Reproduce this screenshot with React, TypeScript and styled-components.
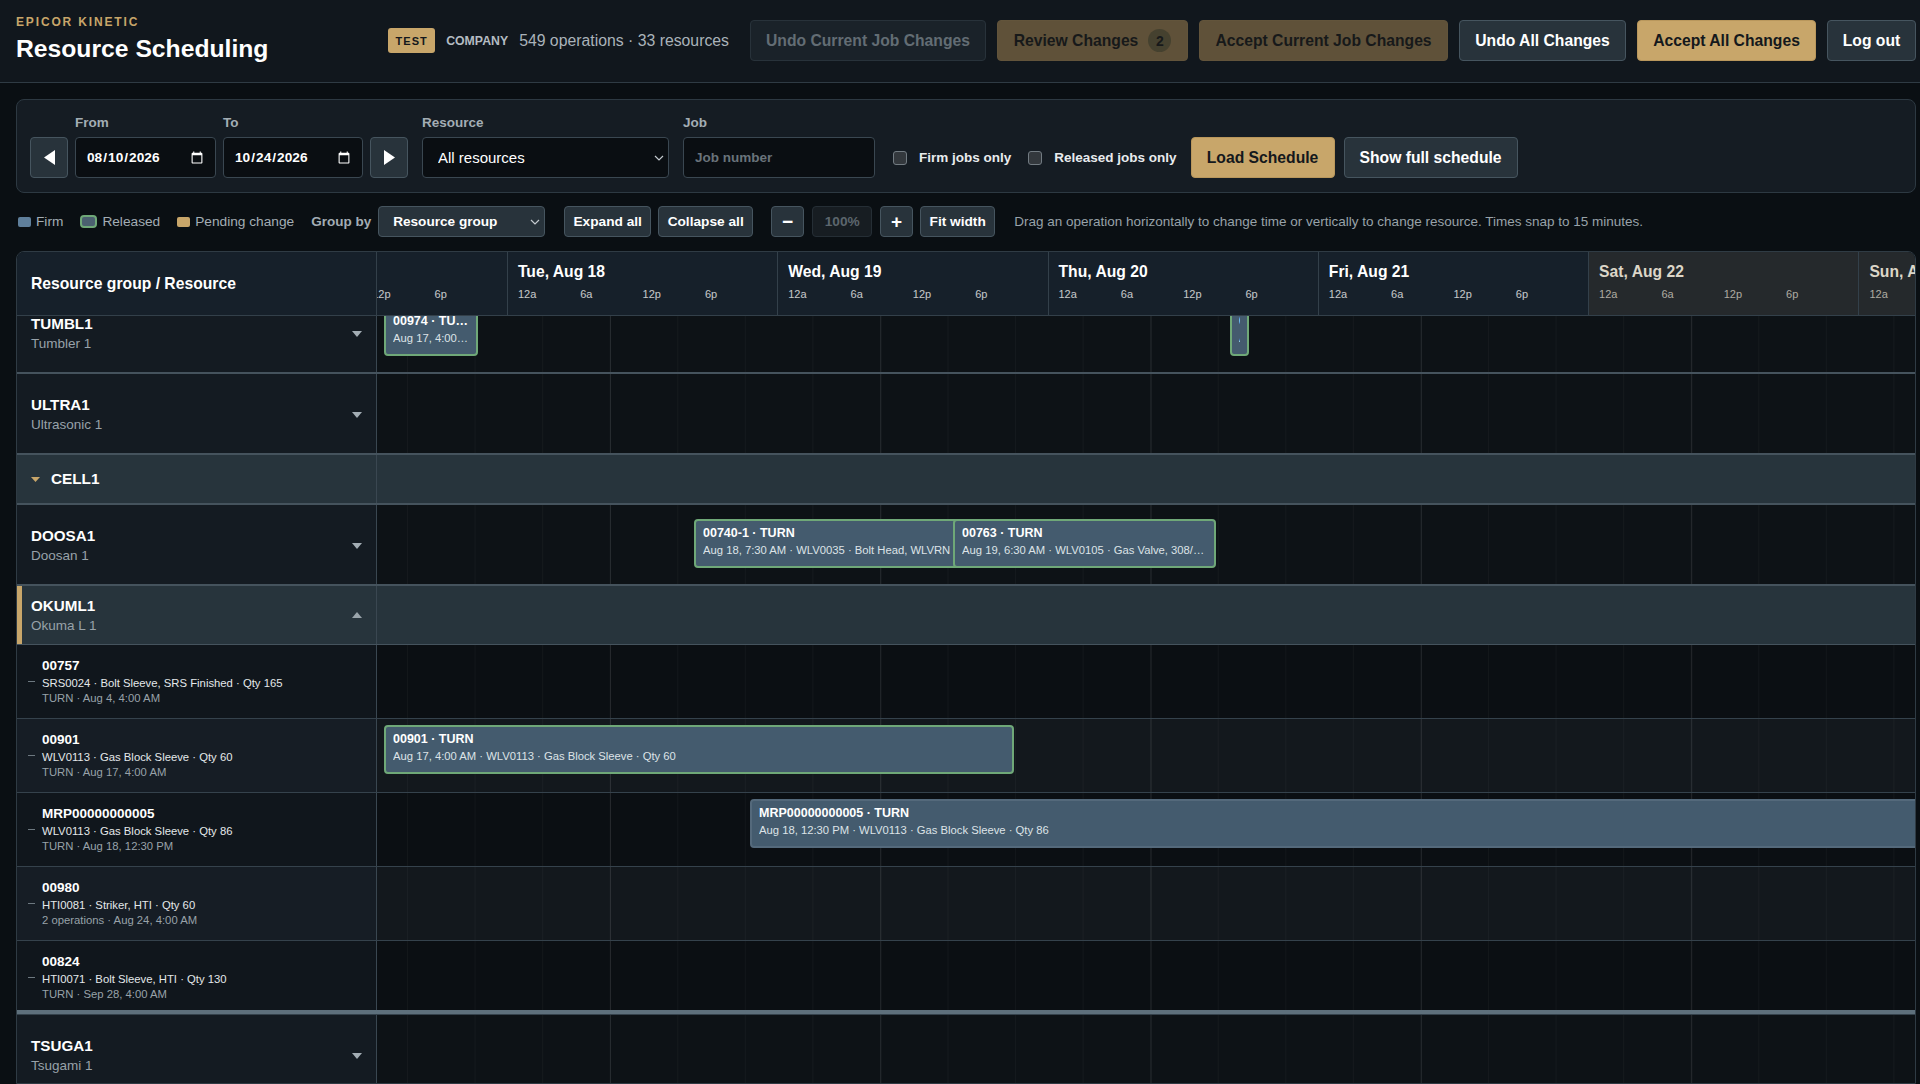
import React from "react";
import styled, { createGlobalStyle, css } from "styled-components";

const ACCENT = "#c8a66a";
const FONT = '"Liberation Sans", Arial, sans-serif';

const GlobalStyle = createGlobalStyle`
  html, body {
    margin: 0;
    height: 100%;
    overflow: hidden;
    background: #0a0f13;
    color: #f2f4f5;
    font-family: ${FONT};
    color-scheme: dark;
  }
  * { box-sizing: border-box; }
`;

const Page = styled.div`
  height: 100vh;
  display: flex;
  flex-direction: column;
  overflow: hidden;
`;

/* ---- top bar ---- */
const TopBar = styled.header`
  flex: none;
  height: 83px;
  display: flex;
  align-items: center;
  padding: 0 4px 0 16px;
  background: #11171d;
  border-bottom: 1px solid #2f3b44;
`;
const Brand = styled.div`
  display: flex;
  flex-direction: column;
  gap: 5px;
  margin-top: -3px;
`;
const Eyebrow = styled.div`
  font-size: 12px;
  font-weight: 700;
  letter-spacing: 1.85px;
  line-height: 14px;
  color: ${ACCENT};
`;
const Title = styled.h1`
  margin: 0;
  font-size: 24.7px;
  line-height: 30px;
  font-weight: 700;
  color: #fff;
`;
const TopRight = styled.div`
  margin-left: auto;
  margin-top: -1px;
  display: flex;
  align-items: center;
`;
const EnvBadge = styled.span`
  height: 25px;
  width: 47px;
  display: flex;
  align-items: center;
  justify-content: center;
  border-radius: 3px;
  background: ${ACCENT};
  color: #14181c;
  font-size: 11px;
  font-weight: 700;
  letter-spacing: 1px;
`;
const Company = styled.span`
  margin-left: 11px;
  font-size: 12.3px;
  font-weight: 700;
  color: #b4bcc2;
`;
const Stats = styled.span`
  margin-left: 11px;
  margin-right: 21px;
  font-size: 15.8px;
  color: #aab3ba;
`;
const TopActions = styled.div`
  display: flex;
  align-items: center;
  gap: 11px;
`;

type Tone = "plain" | "gold" | "goldMuted" | "off";

const toneStyles = {
  plain: css`
    background: #28333b;
    border-color: #46555f;
    color: #fff;
  `,
  gold: css`
    background: ${ACCENT};
    border-color: #b9975c;
    color: #14181c;
  `,
  goldMuted: css`
    background: #5f5139;
    border-color: #62543b;
    color: #17191a;
  `,
  off: css`
    background: #1a2229;
    border-color: #28323a;
    color: #636d74;
  `,
};

const Button = styled.button<{ $tone?: Tone; $w?: number }>`
  height: 41px;
  padding: 0 16px;
  ${(p) => p.$w && `width: ${p.$w}px; padding: 0;`}
  display: inline-flex;
  align-items: center;
  justify-content: center;
  gap: 10px;
  border: 1px solid;
  border-radius: 4px;
  font-family: ${FONT};
  font-size: 15.7px;
  font-weight: 700;
  white-space: nowrap;
  ${(p) => toneStyles[p.$tone || "plain"]}
`;
const CountPill = styled.span`
  width: 23px;
  height: 23px;
  border-radius: 50%;
  display: flex;
  align-items: center;
  justify-content: center;
  background: #45412f;
  color: #17191a;
  font-size: 14px;
`;

/* ---- filter panel ---- */
const FilterPanel = styled.section`
  flex: none;
  height: 94px;
  margin: 16px 4px 0 16px;
  padding: 0 13px 14px;
  display: flex;
  align-items: flex-end;
  gap: 14px;
  background: #151c23;
  border: 1px solid #2d3942;
  border-radius: 8px;
`;
const DateGroup = styled.div`
  display: flex;
  align-items: flex-end;
  gap: 7px;
`;
const Field = styled.label<{ $w: number }>`
  width: ${(p) => p.$w}px;
  display: flex;
  flex-direction: column;
  gap: 7px;
  font-size: 13.5px;
  font-weight: 700;
  line-height: 15px;
  color: #a3adb4;
`;
const controlBase = css`
  width: 100%;
  height: 41px;
  background: #0a0e12;
  border: 1px solid #3a4751;
  border-radius: 4px;
  font-family: ${FONT};
  color: #fff;
  outline: none;
`;
const DateInput = styled.input`
  ${controlBase}
  padding: 0 11px 0 10px;
  font-size: 13.7px;
  font-weight: 700;
  &::-webkit-calendar-picker-indicator {
    margin: 0;
    padding: 0;
    width: 14px;
    height: 14px;
  }
`;
const SelectShell = styled.div<{ $gap?: number }>`
  position: relative;
  margin-right: ${(p) => p.$gap ?? 0}px;
`;
const SelectMark = styled.svg`
  position: absolute;
  right: 5px;
  top: 50%;
  width: 10px;
  height: 6px;
  margin-top: -3px;
  fill: none;
  stroke: #c4cacf;
  stroke-width: 1.2;
  pointer-events: none;
`;
const ResourceSelect = styled.select`
  ${controlBase}
  appearance: none;
  padding: 0 20px 0 15px;
  font-size: 15px;
`;
const JobInput = styled.input`
  ${controlBase}
  padding: 0 11px;
  font-size: 13.5px;
  font-weight: 700;
  &::placeholder {
    color: #69737a;
  }
`;
const ChecksGroup = styled.div`
  height: 41px;
  margin-left: 4px;
  display: flex;
  align-items: center;
  gap: 17px;
`;
const CheckLabel = styled.label`
  display: flex;
  align-items: center;
  gap: 12px;
  font-size: 13.5px;
  font-weight: 700;
  color: #e8ebed;
`;
const CheckBox = styled.input`
  appearance: none;
  margin: 0;
  width: 14px;
  height: 14px;
  background: #33383d;
  border: 1px solid #727b82;
  border-radius: 3px;
`;
const ActionGroup = styled.div`
  display: flex;
  gap: 9px;
`;

/* ---- toolbar ---- */
const ToolRow = styled.div`
  flex: none;
  height: 31px;
  margin: 13px 4px 0 18px;
  display: flex;
  align-items: center;
`;
const LegendItem = styled.span`
  display: flex;
  align-items: center;
  gap: 5px;
  margin-right: 17px;
  font-size: 13.7px;
  color: #a3adb4;
`;
const Swatch = styled.span<{ $kind: "firm" | "released" | "pending" }>`
  width: 13px;
  height: 10px;
  border-radius: 2px;
  background: ${(p) => (p.$kind === "pending" ? ACCENT : "#5f7f9b")};
  ${(p) =>
    p.$kind === "released" &&
    css`
      width: 17px;
      height: 13px;
      border-radius: 4px;
      background: #4b6070;
      border: 2px solid #6fa878;
    `}
`;
const GroupLabel = styled.span`
  margin-right: 7px;
  font-size: 13.5px;
  font-weight: 700;
  color: #a3adb4;
`;
const GroupSelect = styled.select`
  appearance: none;
  width: 167px;
  height: 31px;
  padding: 0 18px 0 14px;
  display: block;
  background: #28333b;
  border: 1px solid #46555f;
  border-radius: 4px;
  color: #fff;
  font-family: ${FONT};
  font-size: 13.6px;
  font-weight: 700;
`;
const SmallButton = styled.button<{ $w: number; $gap?: number; $off?: boolean; $glyph?: boolean }>`
  width: ${(p) => p.$w}px;
  height: 31px;
  margin-right: ${(p) => p.$gap ?? 7}px;
  padding: 0;
  background: ${(p) => (p.$off ? "#171d22" : "#28333b")};
  border: 1px solid ${(p) => (p.$off ? "#252e35" : "#46555f")};
  border-radius: 4px;
  color: ${(p) => (p.$off ? "#5c666d" : "#fff")};
  font-family: ${FONT};
  font-size: ${(p) => (p.$glyph ? 19 : 13.7)}px;
  font-weight: 700;
`;
const Hint = styled.span`
  font-size: 13.5px;
  color: #98a2a9;
  white-space: nowrap;
`;

/* ---- schedule ---- */
const Schedule = styled.section`
  flex: 1;
  min-height: 0;
  display: flex;
  flex-direction: column;
  margin: 14px 4px 0 16px;
  border: 1px solid #2f3b44;
  border-radius: 8px 8px 0 0;
  overflow: hidden;
  background: #0d1216;
`;
const HeadRow = styled.div`
  flex: none;
  height: 64px;
  display: grid;
  grid-template-columns: 360px 1fr;
  border-bottom: 1px solid #33404a;
  background: #16202a;
`;
const HeadLabel = styled.div`
  display: flex;
  align-items: center;
  padding-left: 14px;
  border-right: 1px solid #33404a;
  font-size: 15.7px;
  font-weight: 700;
  color: #fff;
`;
const HeadDays = styled.div`
  overflow: hidden;
  display: flex;
`;
const Day = styled.div<{ $weekend?: boolean; $first?: boolean }>`
  flex: none;
  width: 270.3px;
  padding: 9px 10px 0;
  ${(p) => p.$first && "margin-left: -139.4px;"}
  border-right: 1px solid #33404a;
  background: ${(p) => (p.$weekend ? "#25292c" : "#16202a")};
  color: ${(p) => (p.$weekend ? "#dcd6c8" : "#fff")};
`;
const DayName = styled.div`
  font-size: 15.7px;
  font-weight: 700;
  line-height: 22px;
  white-space: nowrap;
`;
const Ticks = styled.div`
  margin-top: 4px;
  display: grid;
  grid-template-columns: repeat(4, 1fr);
  font-size: 11px;
  line-height: 14px;
  opacity: 0.75;
`;

const Viewport = styled.div`
  flex: 1;
  min-height: 0;
  overflow: hidden;
`;
const Body = styled.div`
  margin-top: -23px;
`;
const Row = styled.div<{ $h: number; $line?: number; $lineColor?: string; $thick?: boolean }>`
  position: relative;
  height: ${(p) => p.$h}px;
  display: grid;
  grid-template-columns: 360px 1fr;
  border-bottom: ${(p) => p.$line ?? 1}px solid ${(p) => p.$lineColor ?? "#35424c"};
  ${(p) =>
    p.$thick &&
    css`
      &::after {
        content: "";
        position: absolute;
        left: 0;
        right: 0;
        bottom: 0;
        height: 4px;
        background: #5e707c;
      }
    `}
`;
const LeftCell = styled.div<{ $bg: string; $marked?: boolean; $nudge?: boolean }>`
  display: flex;
  align-items: center;
  padding-left: ${(p) => (p.$marked ? 9 : 14)}px;
  padding-right: 14px;
  ${(p) => p.$nudge && "padding-top: 2px;"}
  background: ${(p) => p.$bg};
  border-right: 1px solid #3a4751;
  ${(p) => p.$marked && `border-left: 5px solid ${ACCENT};`}
`;
const Track = styled.div<{ $bg: string; $flat?: boolean }>`
  position: relative;
  overflow: hidden;
  background-color: ${(p) => p.$bg};
  ${(p) =>
    !p.$flat &&
    css`
      background-image: linear-gradient(to right, rgba(255, 255, 255, 0.085) 1px, transparent 1px),
        linear-gradient(to right, rgba(255, 255, 255, 0.03) 1px, transparent 1px);
      background-size: 270.3px 100%, 67.575px 100%;
      background-position: 233px 0, 30px 0;
    `}
`;
const ResText = styled.div`
  flex: 1;
  min-width: 0;
`;
const ResName = styled.div`
  font-size: 15.2px;
  font-weight: 700;
  line-height: 21px;
  color: #fff;
`;
const ResSub = styled.div`
  font-size: 13.5px;
  line-height: 20px;
  color: #98a2a9;
`;
const Caret = styled.svg<{ $up?: boolean }>`
  flex: none;
  width: 10px;
  height: 6px;
  fill: ${(p) => (p.$up ? "#9aa4ab" : "#a3adb4")};
  ${(p) => p.$up && "transform: rotate(180deg);"}
`;
const GroupCaret = styled.svg`
  flex: none;
  width: 9px;
  height: 5px;
  margin-right: 11px;
  fill: ${ACCENT};
`;
const GroupName = styled.div`
  font-size: 15.3px;
  font-weight: 700;
  color: #fff;
`;
const Dash = styled.span`
  flex: none;
  width: 7px;
  height: 1px;
  margin: 0 7px 0 -3px;
  background: #6d7880;
`;
const OpTitle = styled.div`
  font-size: 13.5px;
  font-weight: 700;
  line-height: 18px;
  color: #fff;
`;
const OpPart = styled.div`
  font-size: 11.3px;
  line-height: 16px;
  color: #e4e8ea;
`;
const OpMeta = styled.div`
  font-size: 11.3px;
  line-height: 15px;
  color: #98a2a9;
`;
const Bar = styled.div<{ $left: number; $w: number; $top: number; $plain?: boolean }>`
  position: absolute;
  left: ${(p) => p.$left}px;
  width: ${(p) => p.$w}px;
  top: ${(p) => p.$top}px;
  height: 49px;
  padding: 4px 7px;
  overflow: hidden;
  background: #445b6e;
  border: 2px solid ${(p) => (p.$plain ? "#54697b" : "#6fa878")};
  border-radius: 4px;
`;
const BarTitle = styled.div`
  font-size: 12.5px;
  font-weight: 700;
  line-height: 17px;
  color: #fff;
  white-space: nowrap;
  overflow: hidden;
  text-overflow: ellipsis;
`;
const BarSub = styled.div`
  font-size: 11.25px;
  line-height: 17px;
  color: #dde3e7;
  white-space: nowrap;
  overflow: hidden;
  text-overflow: ellipsis;
`;

function TriangleLeft() {
  return (
    <svg width="11" height="15" viewBox="0 0 11 15" fill="#fff">
      <polygon points="11,0 0,7.5 11,15" />
    </svg>
  );
}
function TriangleRight() {
  return (
    <svg width="11" height="15" viewBox="0 0 11 15" fill="#fff">
      <polygon points="0,0 11,7.5 0,15" />
    </svg>
  );
}
function SelectChevron() {
  return (
    <SelectMark viewBox="0 0 10 6">
      <polyline points="1,1 5,5 9,1" />
    </SelectMark>
  );
}

const days = [
  { name: "Mon, Aug 17" },
  { name: "Tue, Aug 18" },
  { name: "Wed, Aug 19" },
  { name: "Thu, Aug 20" },
  { name: "Fri, Aug 21" },
  { name: "Sat, Aug 22", weekend: true },
  { name: "Sun, Aug 23", weekend: true },
];

const RESOURCE_BG = "#141b22";
const TRACK_BG = "#0d1216";

type BarData = { left: number; w: number; title: string; sub: string; plain?: boolean };

function ResourceRow(props: { name: string; sub: string; bars?: BarData[] }) {
  return (
    <Row $h={81} $line={2} $lineColor="#45535d">
      <LeftCell $bg={RESOURCE_BG} $nudge>
        <ResText>
          <ResName>{props.name}</ResName>
          <ResSub>{props.sub}</ResSub>
        </ResText>
        <Caret viewBox="0 0 10 6">
          <polygon points="0,0 10,0 5,6" />
        </Caret>
      </LeftCell>
      <Track $bg={TRACK_BG}>
        {props.bars?.map((b) => (
          <Bar key={b.title} $left={b.left} $w={b.w} $top={14}>
            <BarTitle>{b.title}</BarTitle>
            <BarSub>{b.sub}</BarSub>
          </Bar>
        ))}
      </Track>
    </Row>
  );
}

const ops: {
  id: string;
  part: string;
  meta: string;
  odd?: boolean;
  bar?: BarData;
}[] = [
  { id: "00757", part: "SRS0024 · Bolt Sleeve, SRS Finished · Qty 165", meta: "TURN · Aug 4, 4:00 AM" },
  {
    id: "00901",
    part: "WLV0113 · Gas Block Sleeve · Qty 60",
    meta: "TURN · Aug 17, 4:00 AM",
    odd: true,
    bar: { left: 7, w: 630, title: "00901 · TURN", sub: "Aug 17, 4:00 AM · WLV0113 · Gas Block Sleeve · Qty 60" },
  },
  {
    id: "MRP00000000005",
    part: "WLV0113 · Gas Block Sleeve · Qty 86",
    meta: "TURN · Aug 18, 12:30 PM",
    bar: {
      left: 373,
      w: 1400,
      title: "MRP00000000005 · TURN",
      sub: "Aug 18, 12:30 PM · WLV0113 · Gas Block Sleeve · Qty 86",
      plain: true,
    },
  },
  { id: "00980", part: "HTI0081 · Striker, HTI · Qty 60", meta: "2 operations · Aug 24, 4:00 AM", odd: true },
  { id: "00824", part: "HTI0071 · Bolt Sleeve, HTI · Qty 130", meta: "TURN · Sep 28, 4:00 AM" },
];

export default function App() {
  return (
    <Page>
      <GlobalStyle />
      <TopBar>
        <Brand>
          <Eyebrow>EPICOR KINETIC</Eyebrow>
          <Title>Resource Scheduling</Title>
        </Brand>
        <TopRight>
          <EnvBadge>TEST</EnvBadge>
          <Company>COMPANY</Company>
          <Stats>549 operations · 33 resources</Stats>
          <TopActions>
            <Button $tone="off" $w={236}>Undo Current Job Changes</Button>
            <Button $tone="goldMuted" $w={191}>
              Review Changes <CountPill>2</CountPill>
            </Button>
            <Button $tone="goldMuted" $w={249}>Accept Current Job Changes</Button>
            <Button $w={167}>Undo All Changes</Button>
            <Button $tone="gold" $w={179}>Accept All Changes</Button>
            <Button $w={89}>Log out</Button>
          </TopActions>
        </TopRight>
      </TopBar>

      <FilterPanel>
        <DateGroup>
          <Button $w={38}><TriangleLeft /></Button>
          <Field $w={141}>
            <span>From</span>
            <DateInput type="date" defaultValue="2026-08-10" />
          </Field>
          <Field $w={140}>
            <span>To</span>
            <DateInput type="date" defaultValue="2026-10-24" />
          </Field>
          <Button $w={38}><TriangleRight /></Button>
        </DateGroup>
        <Field $w={247}>
          <span>Resource</span>
          <SelectShell>
            <ResourceSelect defaultValue="all">
              <option value="all">All resources</option>
            </ResourceSelect>
            <SelectChevron />
          </SelectShell>
        </Field>
        <Field $w={192}>
          <span>Job</span>
          <JobInput placeholder="Job number" />
        </Field>
        <ChecksGroup>
          <CheckLabel><CheckBox type="checkbox" /> Firm jobs only</CheckLabel>
          <CheckLabel><CheckBox type="checkbox" /> Released jobs only</CheckLabel>
        </ChecksGroup>
        <ActionGroup>
          <Button $tone="gold" $w={144}>Load Schedule</Button>
          <Button $w={174}>Show full schedule</Button>
        </ActionGroup>
      </FilterPanel>

      <ToolRow>
        <LegendItem><Swatch $kind="firm" /> Firm</LegendItem>
        <LegendItem><Swatch $kind="released" /> Released</LegendItem>
        <LegendItem><Swatch $kind="pending" /> Pending change</LegendItem>
        <GroupLabel>Group by</GroupLabel>
        <SelectShell $gap={19}>
          <GroupSelect defaultValue="group">
            <option value="group">Resource group</option>
          </GroupSelect>
          <SelectChevron />
        </SelectShell>
        <SmallButton $w={87}>Expand all</SmallButton>
        <SmallButton $w={95} $gap={18}>Collapse all</SmallButton>
        <SmallButton $w={33} $gap={8} $glyph>−</SmallButton>
        <SmallButton $w={60} $gap={8} $off>100%</SmallButton>
        <SmallButton $w={33} $glyph>+</SmallButton>
        <SmallButton $w={75} $gap={19}>Fit width</SmallButton>
        <Hint>Drag an operation horizontally to change time or vertically to change resource. Times snap to 15 minutes.</Hint>
      </ToolRow>

      <Schedule>
        <HeadRow>
          <HeadLabel>Resource group / Resource</HeadLabel>
          <HeadDays>
            {days.map((d, i) => (
              <Day key={d.name} $weekend={d.weekend} $first={i === 0}>
                <DayName>{d.name}</DayName>
                <Ticks>
                  <span>12a</span>
                  <span>6a</span>
                  <span>12p</span>
                  <span>6p</span>
                </Ticks>
              </Day>
            ))}
          </HeadDays>
        </HeadRow>
        <Viewport>
          <Body>
            <ResourceRow
              name="TUMBL1"
              sub="Tumbler 1"
              bars={[
                { left: 7, w: 94, title: "00974 · TURN", sub: "Aug 17, 4:00 AM" },
                { left: 853, w: 19, title: "00975 · TURN", sub: "Aug 20, 4:00 PM" },
              ]}
            />
            <ResourceRow name="ULTRA1" sub="Ultrasonic 1" />
            <Row $h={50} $line={2} $lineColor="#45535d">
              <LeftCell $bg="#27343c">
                <GroupCaret viewBox="0 0 9 5">
                  <polygon points="0,0 9,0 4.5,5" />
                </GroupCaret>
                <GroupName>CELL1</GroupName>
              </LeftCell>
              <Track $bg="#27343c" $flat />
            </Row>
            <ResourceRow
              name="DOOSA1"
              sub="Doosan 1"
              bars={[
                { left: 317, w: 272, title: "00740-1 · TURN", sub: "Aug 18, 7:30 AM · WLV0035 · Bolt Head, WLVRN" },
                { left: 576, w: 263, title: "00763 · TURN", sub: "Aug 19, 6:30 AM · WLV0105 · Gas Valve, 308/300 BLK Finished" },
              ]}
            />
            <Row $h={59} $lineColor="#45535d">
              <LeftCell $bg="#27343c" $marked>
                <ResText>
                  <ResName>OKUML1</ResName>
                  <ResSub>Okuma L 1</ResSub>
                </ResText>
                <Caret viewBox="0 0 10 6" $up>
                  <polygon points="0,0 10,0 5,6" />
                </Caret>
              </LeftCell>
              <Track $bg="#27343c" $flat />
            </Row>
            {ops.map((op, i) => (
              <Row key={op.id} $h={74} $thick={i === ops.length - 1}>
                <LeftCell $bg={op.odd ? "#161d25" : "#10161c"}>
                  <Dash />
                  <ResText>
                    <OpTitle>{op.id}</OpTitle>
                    <OpPart>{op.part}</OpPart>
                    <OpMeta>{op.meta}</OpMeta>
                  </ResText>
                </LeftCell>
                <Track $bg={op.odd ? "#13181d" : "#0b0f13"}>
                  {op.bar && (
                    <Bar $left={op.bar.left} $w={op.bar.w} $top={6} $plain={op.bar.plain}>
                      <BarTitle>{op.bar.title}</BarTitle>
                      <BarSub>{op.bar.sub}</BarSub>
                    </Bar>
                  )}
                </Track>
              </Row>
            ))}
            <ResourceRow name="TSUGA1" sub="Tsugami 1" />
          </Body>
        </Viewport>
      </Schedule>
    </Page>
  );
}
